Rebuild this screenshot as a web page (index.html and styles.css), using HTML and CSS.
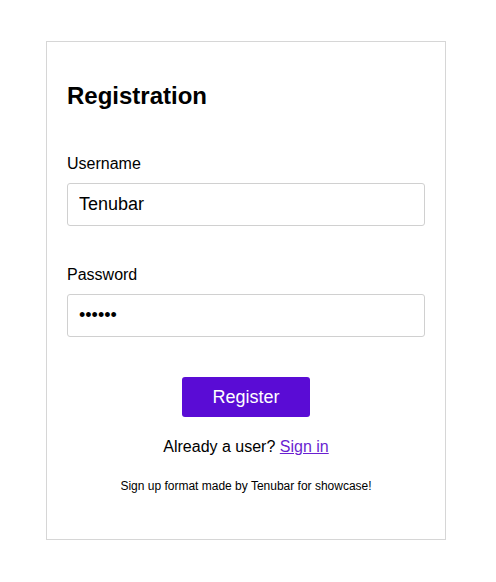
FILE: index.html
```html
<!DOCTYPE html>
<html>
<head>
<meta charset="utf-8">
<link rel="stylesheet" href="styles.css">
</head>
<body>
<div class="card">
  <h2 class="title">Registration</h2>
  <form class="form">
    <label class="label">Username</label>
    <input class="field" type="text" value="Tenubar">
    <label class="label">Password</label>
    <input class="field" type="password" value="secret">
    <button class="btn" type="button">Register</button>
  </form>
  <p class="signin">Already a user? <a href="#" class="link">Sign in</a></p>
  <p class="note">Sign up format made by Tenubar for showcase!</p>
</div>
</body>
</html>
```
FILE: styles.css
```css
html, body {
  margin: 0;
  padding: 0;
  background: #fff;
  font-family: "Liberation Sans", Arial, sans-serif;
  color: #000;
}
body {
  padding-top: 41px;
}
.card {
  width: 400px;
  box-sizing: border-box;
  margin: 0 0 0 46px;
  border: 1px solid #d6d6d6;
  padding: 20px 20px 46px;
}
.title {
  font-size: 24px;
  margin: 20px 0 45px;
}
.form {
  display: flex;
  flex-direction: column;
}
.label {
  font-size: 16px;
  margin-bottom: 10px;
}
.field {
  height: 43px;
  box-sizing: border-box;
  border: 1px solid #d0d0d0;
  border-radius: 3px;
  padding: 0 11px;
  font-family: inherit;
  font-size: 18px;
  margin-bottom: 40px;
}
.btn {
  align-self: center;
  width: 128px;
  height: 40px;
  border: none;
  border-radius: 3px;
  background: #5a0cd5;
  color: #fff;
  font-family: inherit;
  font-size: 18px;
}
.signin {
  text-align: center;
  font-size: 16px;
  margin: 21px 0 0;
}
.link {
  color: #6a1fd1;
}
.note {
  text-align: center;
  font-size: 12px;
  margin: 23px 0 0;
}
```
